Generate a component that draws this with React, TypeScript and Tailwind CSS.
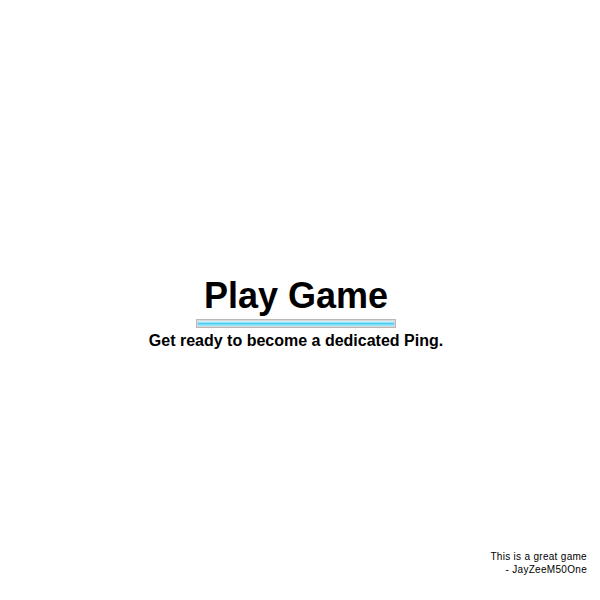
import React from 'react';

const App: React.FC = () => {
  return (
    <div className="relative h-screen w-full bg-white font-['Liberation_Sans',Arial,sans-serif] text-black">
      <div className="flex flex-col items-center pr-[8px] pt-[278px]">
        <h1 className="text-[36px] font-bold leading-[36px]">Play Game</h1>
        <div className="mt-[5px] h-[9px] w-[200px] border border-[#b8b8b8] bg-[#d8d8d8] p-px">
          <div className="h-full w-full bg-gradient-to-b from-[#e6fbff] via-[#4fd0f2] to-[#a6ebfb]" />
        </div>
        <p className="mt-[5px] text-[16px] font-bold leading-[16px]">
          Get ready to become a dedicated Ping.
        </p>
      </div>
      <div className="absolute bottom-[24px] right-[13px] text-right text-[10px] leading-[13px] tracking-[0.3px]">
        <div>This is a great game</div>
        <div>- JayZeeM50One</div>
      </div>
    </div>
  );
};

export default App;
